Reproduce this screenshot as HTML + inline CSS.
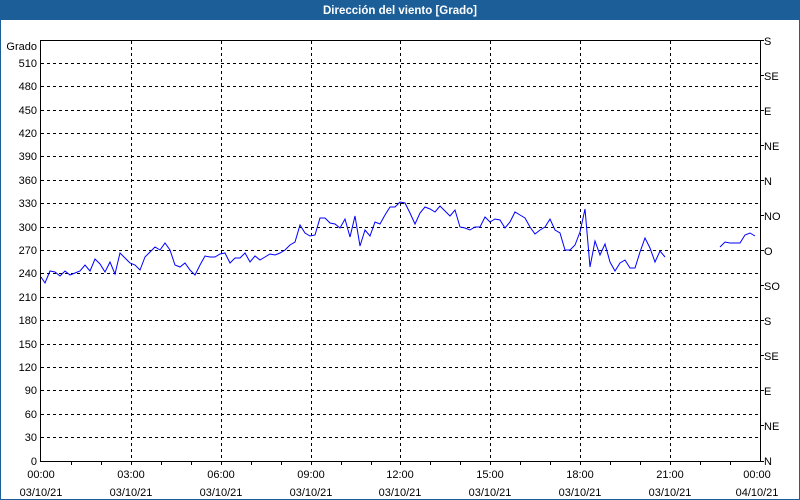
<!DOCTYPE html>
<html><head><meta charset="utf-8"><style>
html,body{margin:0;padding:0;background:#fff}
svg{display:block}
text{font-family:"Liberation Sans",sans-serif;font-size:11px;fill:#000}
</style></head><body>
<svg width="800" height="500" viewBox="0 0 800 500" xmlns="http://www.w3.org/2000/svg">
<rect x="0" y="0" width="800" height="500" fill="#fff"/>
<rect x="0" y="0" width="800" height="20" fill="#1c5e98"/>
<rect x="0.5" y="0.5" width="799" height="499" fill="none" stroke="#1c5e98"/>
<text x="400" y="14" text-anchor="middle" style="fill:#fff;font-weight:bold;font-size:11.5px">Dirección del viento [Grado]</text>
<g stroke="#000" stroke-width="1" stroke-dasharray="3,3" fill="none">
<path d="M131.5 41V461M221.5 41V461M311.5 41V461M400.5 41V461M490.5 41V461M580.5 41V461M670.5 41V461"/>
<path d="M41 437.5H760M41 414.5H760M41 390.5H760M41 367.5H760M41 344.5H760M41 320.5H760M41 297.5H760M41 273.5H760M41 250.5H760M41 227.5H760M41 203.5H760M41 180.5H760M41 156.5H760M41 133.5H760M41 110.5H760M41 86.5H760M41 63.5H760"/>
</g>
<g stroke="#000" stroke-width="1" fill="none">
<path d="M40.5 40.5H760.5V461.5H40.5Z"/>
<path d="M71.5 461V465M101.5 461V465M131.5 461V465M161.5 461V465M191.5 461V465M221.5 461V465M251.5 461V465M281.5 461V465M311.5 461V465M341.5 461V465M371.5 461V465M400.5 461V465M430.5 461V465M460.5 461V465M490.5 461V465M520.5 461V465M550.5 461V465M580.5 461V465M610.5 461V465M640.5 461V465M670.5 461V465M700.5 461V465M730.5 461V465"/>
<path d="M760 40.5H764M760 75.5H764M760 110.5H764M760 145.5H764M760 180.5H764M760 215.5H764M760 250.5H764M760 285.5H764M760 320.5H764M760 355.5H764M760 390.5H764M760 425.5H764M760 461.5H764"/>
</g>
<g text-anchor="end">
<text x="37" y="50">Grado</text>
<text x="37" y="67">510</text><text x="37" y="90">480</text><text x="37" y="114">450</text><text x="37" y="137">420</text><text x="37" y="160">390</text><text x="37" y="184">360</text><text x="37" y="207">330</text><text x="37" y="231">300</text><text x="37" y="254">270</text><text x="37" y="277">240</text><text x="37" y="301">210</text><text x="37" y="324">180</text><text x="37" y="348">150</text><text x="37" y="371">120</text><text x="37" y="394">90</text><text x="37" y="418">60</text><text x="37" y="441">30</text><text x="37" y="465">0</text>
</g>
<g>
<text x="764" y="45">S</text><text x="764" y="80">SE</text><text x="764" y="115">E</text><text x="764" y="150">NE</text><text x="764" y="185">N</text><text x="764" y="220">NO</text><text x="764" y="255">O</text><text x="764" y="290">SO</text><text x="764" y="325">S</text><text x="764" y="360">SE</text><text x="764" y="395">E</text><text x="764" y="430">NE</text><text x="764" y="465">N</text>
</g>
<g text-anchor="middle">
<text x="41" y="478">00:00</text><text x="41" y="496">03/10/21</text>
<text x="131" y="478">03:00</text><text x="131" y="496">03/10/21</text>
<text x="221" y="478">06:00</text><text x="221" y="496">03/10/21</text>
<text x="311" y="478">09:00</text><text x="311" y="496">03/10/21</text>
<text x="400" y="478">12:00</text><text x="400" y="496">03/10/21</text>
<text x="490" y="478">15:00</text><text x="490" y="496">03/10/21</text>
<text x="580" y="478">18:00</text><text x="580" y="496">03/10/21</text>
<text x="670" y="478">21:00</text><text x="670" y="496">03/10/21</text>
<text x="757" y="478">00:00</text><text x="757" y="496">04/10/21</text>
</g>
<g stroke="#0000ff" stroke-width="1" fill="none">
<polyline points="41,277 45,283 50,271 55,272 60,276 65,271 70,275 75,273 80,271 85,265 90,271 95,259 100,264 105,272 110,262 115,274 120,253 125,258 130,263 135,265 140,270 145,257 150,252 155,247 160,250 165,243 170,250 175,265 180,267 185,263 190,270 195,275 200,265 205,256 210,257 215,257 220,254 225,253 230,263 235,258 240,258 245,253 250,262 255,256 260,260 265,257 270,254 275,255 280,253 285,250 290,245 295,242 300,225 305,233 310,236 315,235 320,218 325,218 330,223 335,224 340,228 345,219 350,237 355,216 360,246 365,230 370,236 375,222 380,224 385,215 390,207 395,207 400,202 405,203 410,213 415,224 420,213 425,207 430,209 435,212 440,206 445,211 450,216 455,210 460,227 465,228 470,230 475,227 480,227 485,217 490,222 495,219 500,220 505,228 510,222 515,212 520,215 525,218 530,227 535,234 540,230 545,227 550,219 555,230 560,233 565,250 570,250 575,245 580,232 585,209 590,267 595,241 600,255 605,244 610,262 615,271 620,263 625,260 630,268 635,268 640,252 645,238 650,248 655,262 660,251 665,257"/>
<polyline points="720,247 725,242 730,243 740,243 745,235 750,233 755,236"/>
</g>
</svg>
</body></html>
